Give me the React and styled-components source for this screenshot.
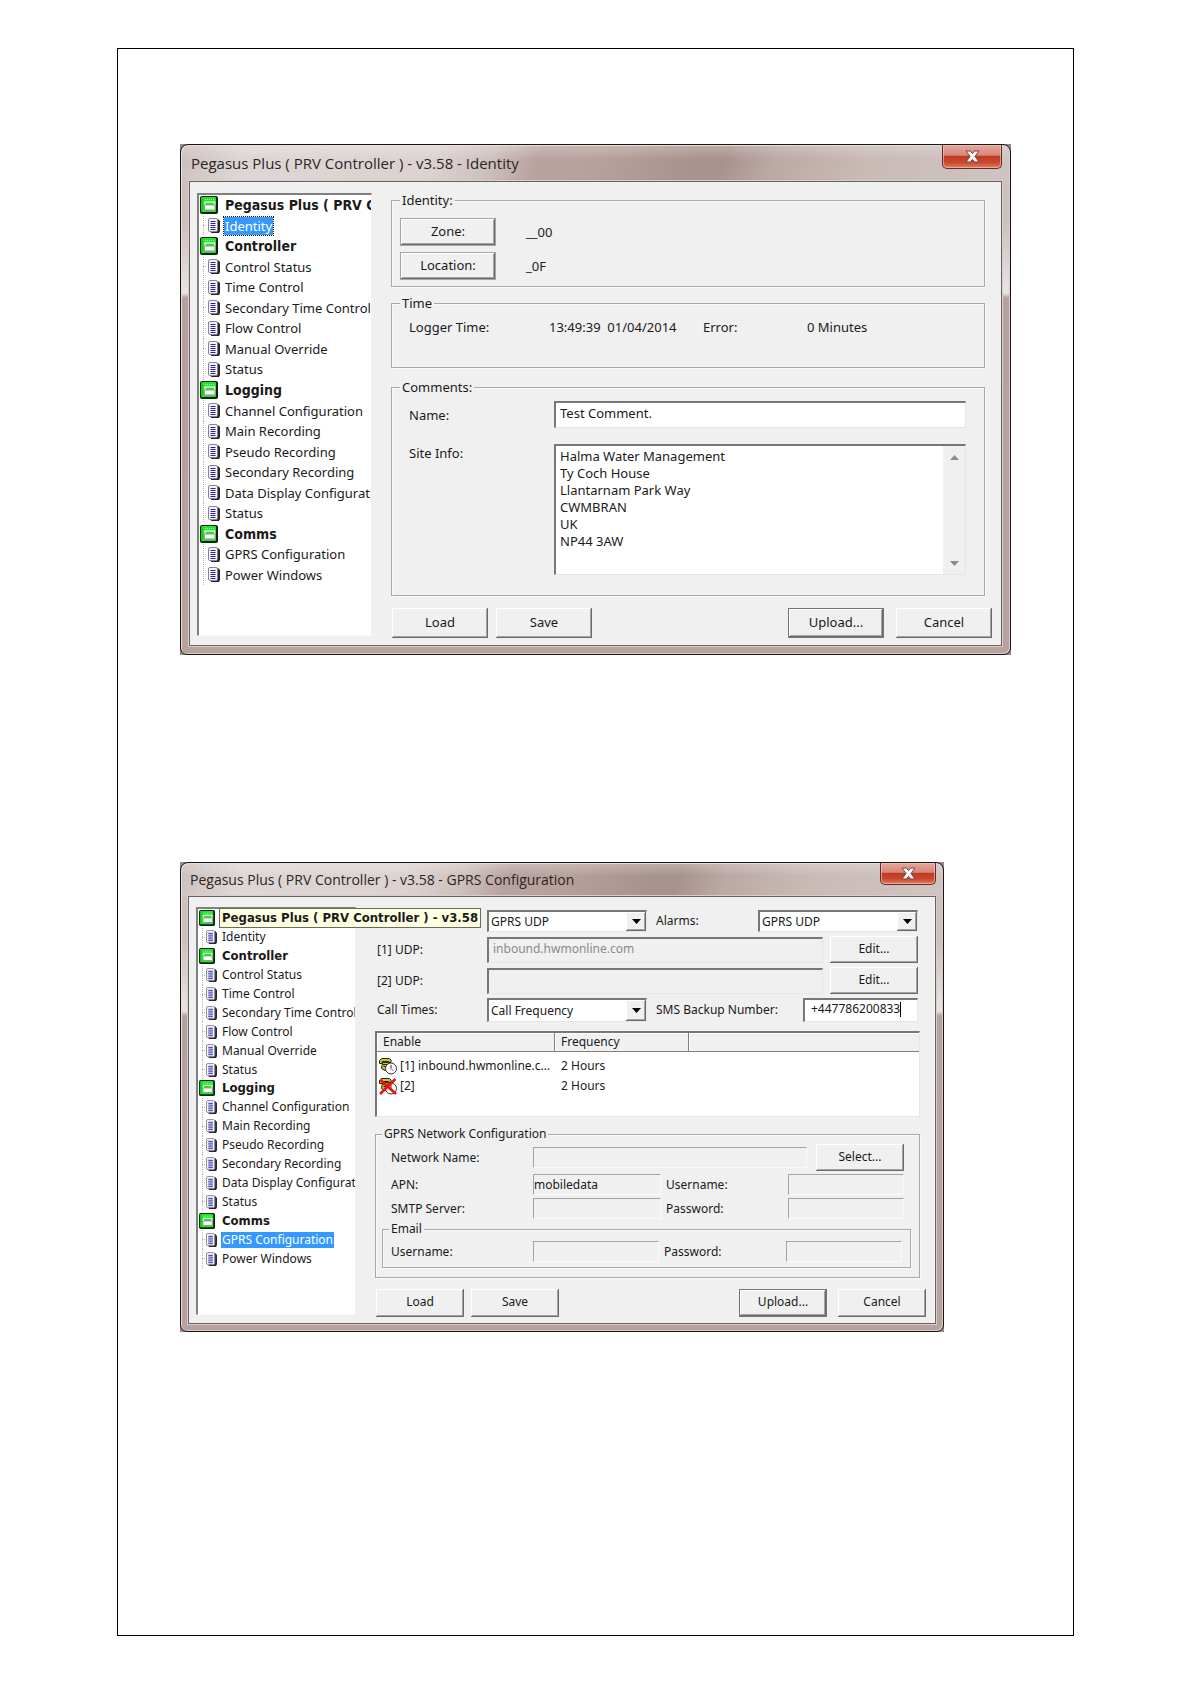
import React, { useId } from "react";
import styled, { createGlobalStyle, css, ThemeProvider } from "styled-components";

const large = {
  text: 13, line: 18, title: 15, strong: 14, titleBar: 36, edge: 8,
  closeW: 60, closeH: 24, treeW: 175, treeTop: 11, treeBottom: 9, treeTail: 50,
  folder: 18, doc: 12, indent: 9, buttonW: 96, buttonH: 30,
};
const small = {
  text: 12, line: 16, title: 14, strong: 13, titleBar: 33, edge: 7,
  closeW: 56, closeH: 22, treeW: 160, treeTop: 10, treeBottom: 8, treeTail: 46,
  folder: 16, doc: 11, indent: 8, buttonW: 88, buttonH: 28,
};

const GlobalStyle = createGlobalStyle`
  *, *::before, *::after { box-sizing: border-box; }
  body { margin: 0; background: #fff; color: #1a1a1a; }
  body, button, input, textarea, select { font-family: "Noto Sans", "Open Sans", sans-serif; }
`;

const Sheet = styled.main`
  margin: 48px 117px;
  min-height: calc(100vh - 96px);
  padding: 95px 62px;
  border: 1px solid #000;
  display: flex;
  flex-direction: column;
  align-items: flex-start;
  gap: 207px;
`;

const Backdrop = styled.section`
  width: 100%;
  max-width: ${(p) => p.$max};
  background: #8f8a89;
`;

const Frame = styled.div`
  border: 1px solid #1c1516;
  border-radius: 8px 8px 7px 7px;
  padding: 0 ${(p) => p.theme.edge}px ${(p) => p.theme.edge}px;
  font-size: ${(p) => p.theme.text}px;
  line-height: ${(p) => p.theme.line}px;
  box-shadow: inset 1px 1px 0 #e6dedc, inset -1px -1px 0 #d8cbc9;
  background:
    linear-gradient(to bottom, rgba(255, 255, 255, 0.25), rgba(255, 255, 255, 0) 40%) 0 0 / 100% ${(p) => p.theme.titleBar}px no-repeat,
    linear-gradient(110deg, #cbbfbc 0, #ded6d4 8%, #dcd3d1 30%, #cfc2bf 37%, #b9a29f 43%, #b8a19d 50%, #a8928e 62%, #a8928e 65%, #bba8a4 71%, #c9bab6 82%, #d0c4c1 100%) 0 0 / 100% ${(p) => p.theme.titleBar}px no-repeat,
    linear-gradient(to bottom, #cdc1be 0, #cdc1be 80px, #e9e4e4 148px, #b5a19f 153px, #b9a29e 100%);
`;

const TitleBar = styled.header`
  height: ${(p) => p.theme.titleBar}px;
  padding-left: 2px;
  display: flex;
  justify-content: space-between;
  align-items: flex-start;
`;

const Title = styled.h1`
  margin: 0;
  font-family: "Open Sans", "Noto Sans", sans-serif;
  font-size: ${(p) => p.theme.title}px;
  font-weight: 400;
  line-height: ${(p) => p.theme.titleBar}px;
  white-space: nowrap;
  color: #2b2526;
`;

const CloseButton = styled.button`
  width: ${(p) => p.theme.closeW}px;
  height: ${(p) => p.theme.closeH}px;
  padding: 0;
  display: grid;
  place-items: center;
  border: 1px solid #5a2f2c;
  border-top: 0;
  border-radius: 0 0 5px 5px;
  box-shadow: inset 0 0 0 1px rgba(255, 200, 190, 0.6);
  background: linear-gradient(to bottom, #e5a79c 0, #d9877a 44%, #c03a22 50%, #c8472c 75%, #dd7f63 100%);
`;

const Client = styled.div`
  border: 1px solid #6d6161;
  background: #f0f0f0;
  box-shadow: 0 0 0 1px #d9cdcb;
  padding: 0 9px 0 7px;
  display: flex;
  gap: 19px;
`;

const Tree = styled.nav`
  position: relative;
  flex: none;
  width: ${(p) => p.theme.treeW}px;
  margin: ${(p) => p.theme.treeTop}px 0 ${(p) => p.theme.treeBottom}px;
  border: 1px solid;
  border-color: #808080 #f0f0f0 #fafafa #808080;
  border-top-width: 2px;
  border-left-width: 2px;
  background: #fff;
  display: flex;
`;

const TreeList = styled.ul`
  list-style: none;
  margin: 0;
  padding: 0 0 ${(p) => p.theme.treeTail}px;
  flex: 1;
  min-width: 0;
  overflow: hidden;
  display: grid;
  grid-auto-rows: 1fr;
`;

const TreeItem = styled.li`
  min-height: 0;
  display: flex;
  align-items: center;
  gap: ${(p) => (p.$heading ? 6 : 4)}px;
  padding-left: ${(p) => (p.$heading ? 1 : p.theme.indent)}px;
  ${(p) => !p.$heading && css`
    background:
      repeating-linear-gradient(to bottom, #b4b4b4 0 1px, transparent 1px 2px) 4px 0 / 1px 100% no-repeat,
      repeating-linear-gradient(to right, #b4b4b4 0 1px, transparent 1px 2px) 4px 50% / 4px 1px no-repeat;
  `}
`;

const strong = css`
  font-family: "DejaVu Sans Condensed", "Noto Sans", sans-serif;
  font-size: ${(p) => p.theme.strong}px;
  font-weight: 700;
`;

const TreeLink = styled.a`
  padding: 0 1px;
  white-space: nowrap;
  color: inherit;
  text-decoration: none;
  ${(p) => p.$heading && strong}
  ${(p) => p.$selected && css`
    color: #fff;
    background: #3399ff;
  `}
  ${(p) => p.$focused && css`
    outline: 1px dotted #26190a;
  `}
`;

const Tip = styled.div`
  position: absolute;
  z-index: 1;
  left: 21px;
  top: -1px;
  padding: 1px 2px;
  border: 1px solid #6b6b5a;
  background: #ffffe1;
  white-space: nowrap;
  ${strong}
`;

const Pane = styled.div`
  flex: 1;
  min-width: 0;
  padding-top: ${(p) => p.$top}px;
`;

const Group = styled.fieldset`
  min-width: 0;
  margin: ${(p) => p.$gap || 0}px ${(p) => p.$right || 0}px 0 0;
  padding: ${(p) => p.$pad};
  border: 1px solid #a8a8a8;
  box-shadow: 1px 1px 0 #fafafa, inset 1px 1px 0 #fafafa;
`;

const Legend = styled.legend`
  padding: 0 2px;
  background: #f0f0f0;
`;

const bevel = css`
  box-shadow: inset -1px -1px 0 #6b6b6b, inset 1px 1px 0 #fff, inset -2px -2px 0 #a3a3a3;
`;

const Button = styled.button`
  flex: none;
  width: ${(p) => p.theme.buttonW}px;
  height: ${(p) => p.$height || p.theme.buttonH}px;
  padding: 0 0 2px;
  border: 0 solid ${(p) => p.$edge || "#747474"};
  border-width: ${(p) => (p.$edge ? 1 : 0)}px;
  background: #f0f0f0;
  color: inherit;
  font-size: inherit;
  line-height: inherit;
  ${bevel}
`;

const Footer = styled.footer`
  display: flex;
  margin-top: ${(p) => p.$top}px;
  padding: 0 0 ${(p) => p.$bottom}px 1px;
  gap: ${(p) => p.$gap}px;
`;

const FooterEnd = styled.div`
  margin-left: auto;
  display: flex;
  gap: ${(p) => p.$gap}px;
`;

const Stack = styled.div`
  display: grid;
  grid-template-columns: minmax(0, 1fr);
  gap: ${(p) => p.$gap}px;
`;

const ReadingRow = styled.div`
  display: flex;
  align-items: center;
  gap: 30px;
`;

const TimeRow = styled.div`
  display: grid;
  grid-template-columns: 140px 154px 104px 1fr;
  padding: 0 9px;
  white-space: pre;
`;

const CommentGrid = styled.div`
  display: grid;
  grid-template-columns: 145px 1fr;
  row-gap: 16px;
  padding: 0 10px 0 9px;
`;

const sunken = css`
  border: 1px solid;
  border-color: #777 #e6e6e6 #e6e6e6 #777;
  border-top-width: 2px;
  border-left-width: 2px;
  background: #fff;
`;

const control = css`
  min-width: 0;
  margin: 0;
  color: inherit;
  font-size: inherit;
  line-height: inherit;
  border-radius: 0;
  outline: 0;
`;

const TextInput = styled.input`
  ${control}
  ${sunken}
  width: 100%;
  height: ${(p) => p.$height}px;
  padding: 0 4px 4px;
  &:disabled { background: #f0f0f0; color: #8a8a8a; }
`;

const FlatInput = styled.input`
  ${control}
  width: ${(p) => p.$width || "auto"};
  flex: ${(p) => (p.$width ? "none" : "1")};
  height: 21px;
  padding: 0;
  border: 1px solid;
  border-color: #a3a3a3 #fafafa #fafafa #a3a3a3;
  background: #f0f0f0;
`;

const MemoBox = styled.div`
  ${sunken}
  height: 131px;
  display: flex;
`;

const Memo = styled.textarea`
  ${control}
  flex: 1;
  padding: 2px 4px;
  border: 0;
  resize: none;
  overflow: hidden;
  white-space: pre;
  background: transparent;
  line-height: 17px;
`;

const ScrollBar = styled.div`
  width: 22px;
  background: #f0f0f0;
  display: flex;
  flex-direction: column;
  justify-content: space-between;
`;

const ScrollButton = styled.button`
  height: 22px;
  padding: 0;
  border: 0;
  background: transparent;
  display: grid;
  place-items: center;
`;

const FieldLabel = styled.label`
  align-self: ${(p) => p.$align || "center"};
  white-space: nowrap;
`;

const FormRow = styled.div`
  display: flex;
  align-items: center;
  min-height: ${(p) => p.$height}px;
  padding: 0 ${(p) => p.$inset}px;
`;

const LeadLabel = styled.label`
  flex: none;
  width: ${(p) => p.$width}px;
  line-height: 20px;
`;

const MidLabel = styled.label`
  flex: ${(p) => (p.$width ? "none" : "1")};
  width: ${(p) => (p.$width ? `${p.$width}px` : "auto")};
  padding-left: ${(p) => p.$pad}px;
  white-space: nowrap;
  line-height: 20px;
`;

const Spacer = styled.span`
  flex: none;
  width: ${(p) => p.$width}px;
`;

const SelectBox = styled.div`
  ${sunken}
  flex: none;
  width: 160px;
  height: ${(p) => p.$height}px;
  display: grid;
  grid-template-columns: 1fr 20px;
`;

const Select = styled.select`
  ${control}
  grid-area: 1 / 1 / 2 / 3;
  appearance: none;
  border: 0;
  padding: 1px 20px 0 2px;
  background: transparent;
`;

const SelectArrow = styled.span`
  grid-area: 1 / 2;
  pointer-events: none;
  display: grid;
  place-items: center;
  background: #f0f0f0;
  ${bevel}
`;

const NumberBox = styled.div`
  ${sunken}
  flex: none;
  width: 115px;
  height: 24px;
  padding: 0 0 3px 6px;
  display: flex;
  align-items: center;
`;

const NumberInput = styled.input`
  ${control}
  field-sizing: content;
  border: 0;
  padding: 0;
  background: transparent;
`;

const Caret = styled.span`
  width: 1px;
  height: 15px;
  background: #000;
`;

const ListBox = styled.div`
  ${sunken}
  margin: 9px 0;
  padding-bottom: 20px;
`;

const Table = styled.table`
  width: 100%;
  border-collapse: separate;
  border-spacing: 0;
  table-layout: fixed;
  tbody::before { content: ""; display: block; height: 4px; }
`;

const HeadCell = styled.th`
  width: ${(p) => p.$width || "auto"};
  height: 19px;
  padding: 0 6px;
  text-align: left;
  font-weight: 400;
  background: #f0f0f0;
  border-bottom: 1px solid #808080;
  border-right: ${(p) => (p.$width ? "1px solid #808080" : 0)};
  box-shadow: inset 1px 1px 0 #fff;
`;

const Cell = styled.td`
  height: 20px;
  padding: 0 ${(p) => (p.$icon ? 0 : 6)}px 0 ${(p) => (p.$icon ? 2 : 6)}px;
  white-space: nowrap;
`;

const CellContent = styled.div`
  display: flex;
  align-items: center;
  gap: 3px;
`;

const Lower = styled.div`
  margin-right: 6px;
`;

function FolderIcon({ size }) {
  return (
    <svg width={size} height={size} viewBox="0 0 18 18" aria-hidden="true">
      <rect x="0" y="0" width="18" height="18" rx="2" fill="#10240f" />
      <rect x="1" y="1" width="15" height="15" rx="1" fill="#22e428" />
      <path d="M2 1.500v14" stroke="#10b015" />
      <path d="M5 3.500h10" stroke="#b6f5b6" strokeDasharray="1 1" />
      <path d="M5 9V6h9.500v3" fill="none" stroke="#d9f7d9" strokeWidth="1.500" />
      <rect x="4.500" y="9" width="10.500" height="5" fill="#fff" stroke="#7fa583" />
    </svg>
  );
}

function DocIcon({ size }) {
  return (
    <svg width={size} height={size + 3} viewBox="0 0 12 15" aria-hidden="true">
      <path d="M3 1h7l2 2v10l-1 2H3z" fill="#26262c" />
      <rect x="0.500" y="0.500" width="9" height="13" rx="1.500" fill="#f4f4fb" stroke="#85858f" />
      <path d="M2.500 3.500h5M2.500 5.500h5M2.500 7.500h5M2.500 9.500h5M2.500 11.500h5" stroke="#2a1f9c" />
    </svg>
  );
}

function CloseGlyph() {
  return (
    <svg width="15" height="13" viewBox="0 0 15 13" aria-hidden="true">
      <path d="M1 1h4.300L7.500 3.500 9.700 1H14l-4 5.500 4 5.500H9.700L7.500 9.500 5.300 12H1l4-5.500z" fill="#f8f5f5" stroke="#6a4a4c" />
    </svg>
  );
}

function Triangle({ width, color, up }) {
  return (
    <svg width={width} height="5" viewBox="0 0 9 5" preserveAspectRatio="none" aria-hidden="true">
      <path d={up ? "M0 5L4.500 0 9 5z" : "M0 0h9L4.500 5z"} fill={color} />
    </svg>
  );
}

function PhoneIcon({ crossed }) {
  return (
    <svg width="18" height="17" viewBox="0 0 18 17" aria-hidden="true">
      <path d="M3.500 4.500h6l1 8H6l-3.500-2z" fill="#c4cc18" stroke="#222" />
      <path d="M.5 2.500L3 .5h7.500L12 2v2.500H9.500V3.500h-6L3 5.500H.5z" fill="#c4cc18" stroke="#222" />
      <path d="M4 6.500h4M4.500 8.500h3M6 10.500h2" stroke="#222" />
      <circle cx="12" cy="10.500" r="5.500" fill="#fff" stroke="#333" />
      <path d="M12 7v3.500" stroke="#333" />
      <path d="M12 10.500l2.500 2.500" stroke="#d22" />
      {crossed && <path d="M1 1.500L17 16M16.500 1L1 16" stroke="#ee1111" strokeWidth="2.500" />}
    </svg>
  );
}

const treeEntries = [
  ["Pegasus Plus ( PRV Controller ) - v3.58", true],
  ["Identity"],
  ["Controller", true],
  ["Control Status"],
  ["Time Control"],
  ["Secondary Time Control"],
  ["Flow Control"],
  ["Manual Override"],
  ["Status"],
  ["Logging", true],
  ["Channel Configuration"],
  ["Main Recording"],
  ["Pseudo Recording"],
  ["Secondary Recording"],
  ["Data Display Configuration"],
  ["Status"],
  ["Comms", true],
  ["GPRS Configuration"],
  ["Power Windows"],
];

function NavTree({ sizes, selected, focused, tip }) {
  return (
    <Tree aria-label="Sections">
      <TreeList>
        {treeEntries.map(([name, heading], i) => (
          <TreeItem key={i} $heading={heading}>
            {heading ? <FolderIcon size={sizes.folder} /> : <DocIcon size={sizes.doc} />}
            {tip && i === 0 ? null : (
              <TreeLink
                href="#"
                $heading={heading}
                $selected={name === selected}
                $focused={focused && name === selected}
              >
                {name}
              </TreeLink>
            )}
          </TreeItem>
        ))}
      </TreeList>
      {tip && <Tip role="tooltip">{tip}</Tip>}
    </Tree>
  );
}

function Dialog({ sizes, title, max, selected, focused, tip, top, children }) {
  return (
    <ThemeProvider theme={sizes}>
      <Backdrop $max={max}>
        <Frame>
          <TitleBar>
            <Title>{title}</Title>
            <CloseButton type="button" aria-label="Close"><CloseGlyph /></CloseButton>
          </TitleBar>
          <Client>
            <NavTree sizes={sizes} selected={selected} focused={focused} tip={tip} />
            <Pane $top={top}>{children}</Pane>
          </Client>
        </Frame>
      </Backdrop>
    </ThemeProvider>
  );
}

function Actions({ top, bottom, gap, endGap }) {
  return (
    <Footer $top={top} $bottom={bottom} $gap={gap}>
      <Button type="button">Load</Button>
      <Button type="button">Save</Button>
      <FooterEnd $gap={endGap}>
        <Button type="button" $edge="#747474">Upload...</Button>
        <Button type="button">Cancel</Button>
      </FooterEnd>
    </Footer>
  );
}

function DropDown({ id, label, height, value }) {
  return (
    <SelectBox $height={height}>
      <Select id={id} aria-label={label} defaultValue={value}>
        <option>{value}</option>
      </Select>
      <SelectArrow><Triangle width={9} color="#000" /></SelectArrow>
    </SelectBox>
  );
}

function IdentityDialog() {
  const id = useId();
  return (
    <Dialog
      sizes={large}
      max="none"
      title="Pegasus Plus ( PRV Controller ) - v3.58 - Identity"
      selected="Identity"
      focused
      top={9}
    >
      <Group $right={7} $pad="9px 8px 6px">
        <Legend>Identity:</Legend>
        <Stack $gap={6}>
          <ReadingRow>
            <Button type="button" $edge="#a6a6a6" $height={28}>Zone:</Button>
            <span>__00</span>
          </ReadingRow>
          <ReadingRow>
            <Button type="button" $edge="#a6a6a6" $height={28}>Location:</Button>
            <span>_0F</span>
          </ReadingRow>
        </Stack>
      </Group>
      <Group $gap={7} $right={7} $pad="6px 8px 31px">
        <Legend>Time</Legend>
        <TimeRow>
          <span>Logger Time:</span>
          <span>13:49:39  01/04/2014</span>
          <span>Error:</span>
          <span>0 Minutes</span>
        </TimeRow>
      </Group>
      <Group $gap={10} $right={7} $pad="5px 8px 20px">
        <Legend>Comments:</Legend>
        <CommentGrid>
          <FieldLabel htmlFor={`${id}-name`}>Name:</FieldLabel>
          <TextInput id={`${id}-name`} $height={27} defaultValue="Test Comment." />
          <FieldLabel htmlFor={`${id}-info`} $align="start">Site Info:</FieldLabel>
          <MemoBox>
            <Memo
              id={`${id}-info`}
              defaultValue={"Halma Water Management\nTy Coch House\nLlantarnam Park Way\nCWMBRAN\nUK\nNP44 3AW"}
            />
            <ScrollBar>
              <ScrollButton type="button" aria-label="Scroll up"><Triangle width={9} color="#8c8c8c" up /></ScrollButton>
              <ScrollButton type="button" aria-label="Scroll down"><Triangle width={9} color="#8c8c8c" /></ScrollButton>
            </ScrollBar>
          </MemoBox>
        </CommentGrid>
      </Group>
      <Actions top={12} bottom={7} gap={8} endGap={12} />
    </Dialog>
  );
}

function GprsDialog() {
  const id = useId();
  return (
    <Dialog
      sizes={small}
      max="764px"
      title="Pegasus Plus ( PRV Controller ) - v3.58 - GPRS Configuration"
      selected="GPRS Configuration"
      tip="Pegasus Plus ( PRV Controller ) - v3.58"
      top={13}
    >
      <Lower>
        <Stack $gap={4}>
          <FormRow $height={22} $inset={2}>
            <Spacer $width={110} />
            <DropDown id={`${id}-data`} label="Data" height={22} value="GPRS UDP" />
            <MidLabel htmlFor={`${id}-alarms`} $pad={9}>Alarms:</MidLabel>
            <DropDown id={`${id}-alarms`} height={22} value="GPRS UDP" />
          </FormRow>
          <FormRow $height={27} $inset={2}>
            <LeadLabel htmlFor={`${id}-udp1`} $width={110}>[1] UDP:</LeadLabel>
            <TextInput id={`${id}-udp1`} $height={26} disabled defaultValue="inbound.hwmonline.com" />
            <Spacer $width={7} />
            <Button type="button" $height={27}>Edit...</Button>
          </FormRow>
          <FormRow $height={27} $inset={2}>
            <LeadLabel htmlFor={`${id}-udp2`} $width={110}>[2] UDP:</LeadLabel>
            <TextInput id={`${id}-udp2`} $height={26} disabled />
            <Spacer $width={7} />
            <Button type="button" $height={27}>Edit...</Button>
          </FormRow>
          <FormRow $height={24} $inset={2}>
            <LeadLabel htmlFor={`${id}-times`} $width={110}>Call Times:</LeadLabel>
            <DropDown id={`${id}-times`} height={24} value="Call Frequency" />
            <MidLabel htmlFor={`${id}-sms`} $pad={9}>SMS Backup Number:</MidLabel>
            <NumberBox>
              <NumberInput id={`${id}-sms`} defaultValue="+447786200833" />
              <Caret />
            </NumberBox>
          </FormRow>
        </Stack>
        <ListBox>
          <Table>
            <thead>
              <tr>
                <HeadCell $width="178px">Enable</HeadCell>
                <HeadCell $width="134px">Frequency</HeadCell>
                <HeadCell aria-label="Notes" />
              </tr>
            </thead>
            <tbody>
              <tr>
                <Cell $icon><CellContent><PhoneIcon />[1] inbound.hwmonline.c...</CellContent></Cell>
                <Cell>2 Hours</Cell>
                <Cell />
              </tr>
              <tr>
                <Cell $icon><CellContent><PhoneIcon crossed />[2]</CellContent></Cell>
                <Cell>2 Hours</Cell>
                <Cell />
              </tr>
            </tbody>
          </Table>
        </ListBox>
        <Group $pad="2px 6px 9px">
          <Legend>GPRS Network Configuration</Legend>
          <Stack $gap={3}>
            <FormRow $height={27} $inset={9}>
              <LeadLabel htmlFor={`${id}-net`} $width={142}>Network Name:</LeadLabel>
              <FlatInput id={`${id}-net`} readOnly />
              <Spacer $width={9} />
              <Button type="button" $height={27}>Select...</Button>
            </FormRow>
            <FormRow $height={21} $inset={9}>
              <LeadLabel htmlFor={`${id}-apn`} $width={142}>APN:</LeadLabel>
              <FlatInput id={`${id}-apn`} readOnly defaultValue="mobiledata" />
              <MidLabel htmlFor={`${id}-user`} $pad={5} $width={127}>Username:</MidLabel>
              <FlatInput id={`${id}-user`} $width="116px" readOnly />
            </FormRow>
            <FormRow $height={21} $inset={9}>
              <LeadLabel htmlFor={`${id}-smtp`} $width={142}>SMTP Server:</LeadLabel>
              <FlatInput id={`${id}-smtp`} readOnly />
              <MidLabel htmlFor={`${id}-pass`} $pad={5} $width={127}>Password:</MidLabel>
              <FlatInput id={`${id}-pass`} $width="116px" readOnly />
            </FormRow>
          </Stack>
          <Group $gap={2} $right={2} $pad="4px 6px 5px">
            <Legend>Email</Legend>
            <FormRow $height={21} $inset={2}>
              <LeadLabel htmlFor={`${id}-muser`} $width={142}>Username:</LeadLabel>
              <FlatInput id={`${id}-muser`} readOnly />
              <MidLabel htmlFor={`${id}-mpass`} $pad={5} $width={127}>Password:</MidLabel>
              <FlatInput id={`${id}-mpass`} $width="116px" readOnly />
            </FormRow>
          </Group>
        </Group>
      </Lower>
      <Actions top={11} bottom={6} gap={7} endGap={11} />
    </Dialog>
  );
}

export default function App() {
  return (
    <>
      <GlobalStyle />
      <Sheet>
        <IdentityDialog />
        <GprsDialog />
      </Sheet>
    </>
  );
}
